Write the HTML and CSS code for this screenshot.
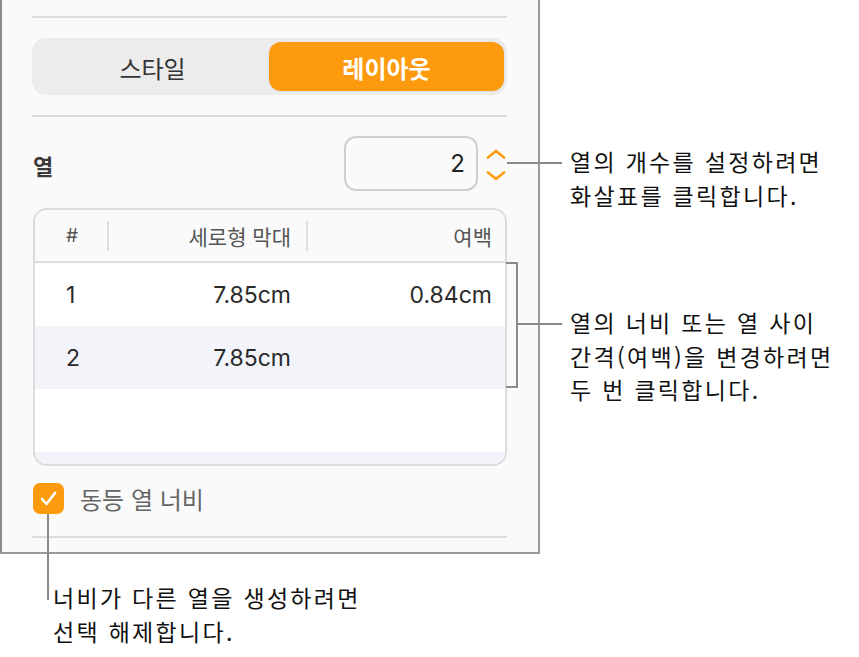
FILE: index.html
```html
<!DOCTYPE html>
<html lang="ko">
<head>
<meta charset="utf-8">
<title>열 레이아웃</title>
<link rel="stylesheet" href="styles.css">
</head>
<body>
<div class="stage">
  <section class="panel">
    <div class="divider first"></div>
    <div class="segmented">
      <div class="seg">스타일</div>
      <div class="seg active">레이아웃</div>
    </div>
    <div class="divider"></div>
    <div class="cols-row">
      <div class="label">열</div>
      <div class="stepper">
        <div class="field">2</div>
        <div class="arrows">
          <svg width="20" height="10" viewBox="0 0 20 10"><path d="M2 8.5 L10 2 L18 8.5" fill="none" stroke="#fe9a0d" stroke-width="2.6" stroke-linecap="round" stroke-linejoin="round"/></svg>
          <svg width="20" height="10" viewBox="0 0 20 10"><path d="M2 1.5 L10 8 L18 1.5" fill="none" stroke="#fe9a0d" stroke-width="2.6" stroke-linecap="round" stroke-linejoin="round"/></svg>
        </div>
      </div>
    </div>
    <div class="table">
      <div class="thead">
        <div class="th c1">#</div>
        <div class="th c2 sep">세로형 막대</div>
        <div class="th c3 sep">여백</div>
      </div>
      <div class="tr">
        <div class="td c1">1</div>
        <div class="td c2">7.85cm</div>
        <div class="td c3">0.84cm</div>
      </div>
      <div class="tr alt">
        <div class="td c1">2</div>
        <div class="td c2">7.85cm</div>
        <div class="td c3"></div>
      </div>
      <div class="tr"></div>
      <div class="strip"></div>
    </div>
    <div class="check-row">
      <div class="checkbox">
        <svg width="31" height="31" viewBox="0 0 31 31"><path d="M9 16 L13.5 21 L22 10" fill="none" stroke="#fff" stroke-width="2.6" stroke-linecap="round" stroke-linejoin="round"/></svg>
      </div>
      <div class="check-label">동등 열 너비</div>
    </div>
    <div class="divider last"></div>
  </section>

  <div class="line line1"></div>
  <p class="callout callout1">열의 개수를 설정하려면<br>화살표를 클릭합니다.</p>

  <div class="bracket"></div>
  <div class="line line2"></div>
  <p class="callout callout2">열의 너비 또는 열 사이<br>간격(여백)을 변경하려면<br>두 번 클릭합니다.</p>

  <div class="vline"></div>
  <p class="callout callout3">너비가 다른 열을 생성하려면<br>선택 해제합니다.</p>
</div>
</body>
</html>
```

FILE: styles.css
```css
* { box-sizing: border-box; }
html, body { margin: 0; padding: 0; background: #ffffff; }
body {
  font-family: "Inter", "Noto Sans CJK KR", sans-serif;
  color: #222;
}
.stage {
  position: relative;
  width: 859px;
  height: 657px;
  overflow: hidden;
}
.panel {
  width: 540px;
  height: 554px;
  background: #fafafa;
  border-left: 2px solid #8c8c8c;
  border-right: 2px solid #9a9a9a;
  border-bottom: 2px solid #9a9a9a;
  padding: 16px 31px 0 30px;
  display: flex;
  flex-direction: column;
}
.divider {
  height: 2px;
  background: #dcdcdc;
  flex: none;
}
.segmented {
  margin-top: 20px;
  height: 57px;
  background: #ececec;
  border-radius: 14px;
  padding: 4px 3px 4px 4px;
  display: grid;
  grid-template-columns: 1fr 235px;
  margin-bottom: 20px;
}
.seg {
  display: flex;
  align-items: center;
  justify-content: center;
  font-size: 24px;
  color: #333;
  font-family: "Noto Sans CJK KR", sans-serif;
  padding-top: 1px;
}
.seg.active {
  background: #fe9a0d;
  color: #fff;
  border-radius: 12px;
  font-weight: 700;
  box-shadow: 0 0 2px rgba(0,0,0,0.12);
}
.cols-row {
  margin-top: 19px;
  display: flex;
  align-items: center;
  justify-content: space-between;
  height: 55px;
}
.label {
  font-family: "Noto Sans CJK KR", sans-serif;
  font-weight: 700;
  font-size: 22px;
  color: #3a3a3a;
  padding-left: 1px;
  padding-top: 2px;
}
.stepper {
  display: flex;
  align-items: center;
  gap: 8px;
  padding-right: 1px;
}
.field {
  width: 134px;
  height: 55px;
  border: 2px solid #cfcfcf;
  border-radius: 12px;
  background: #fafafa;
  display: flex;
  align-items: center;
  justify-content: flex-end;
  padding-right: 11px;
  font-size: 24px;
  color: #222;
}
.arrows {
  display: flex;
  flex-direction: column;
  gap: 12px;
  width: 20px;
  padding-top: 2px;
}
.arrows svg { display: block; }
.table {
  margin-top: 17px;
  margin-left: 1px;
  border: 2px solid #dcdcdc;
  border-radius: 14px;
  overflow: hidden;
  background: #fff;
  flex: none;
}
.thead {
  height: 53px;
  background: #fafafa;
  border-bottom: 2px solid #dcdcdc;
  display: grid;
  grid-template-columns: 72px 199px 1fr;
  align-items: center;
}
.th {
  font-size: 21px;
  color: #555;
  height: 30px;
  display: flex;
  align-items: center;
  font-family: "Noto Sans CJK KR", sans-serif;
}
.th.sep { border-left: 2px solid #dedede; }
.c1 { padding-left: 31px; }
.c2 { justify-content: flex-end; padding-right: 15px; }
.c3 { justify-content: flex-end; padding-right: 13px; }
.th.c1 { font-family: "Inter", sans-serif; font-size: 19px; }
.tr {
  height: 63px;
  display: grid;
  grid-template-columns: 72px 199px 1fr;
  align-items: center;
}
.tr.alt { background: #f2f4fa; }
.td {
  display: flex;
  font-size: 23px;
  color: #2a2a2a;
}
.strip {
  height: 12px;
  background: #f2f4fa;
}
.check-row {
  margin-top: 17px;
  height: 31px;
  display: flex;
  align-items: center;
  gap: 16px;
  padding-left: 1px;
}
.checkbox {
  width: 31px;
  height: 31px;
  border-radius: 7px;
  background: #fe9a0d;
  flex: none;
}
.checkbox svg { display: block; }
.check-label {
  font-family: "Noto Sans CJK KR", sans-serif;
  font-size: 24px;
  line-height: 31px;
  color: #666;
}
.divider.last { margin-top: 22px; }

/* annotations */
.line {
  position: absolute;
  height: 2px;
  background: #8a8a8a;
}
.line1 { left: 507px; top: 162px; width: 55px; }
.line2 { left: 518px; top: 323px; width: 44px; }
.bracket {
  position: absolute;
  left: 506px;
  top: 262px;
  width: 12px;
  height: 126px;
  border: 2px solid #8a8a8a;
  border-left: none;
}
.vline {
  position: absolute;
  left: 47px;
  top: 514px;
  width: 2px;
  height: 86px;
  background: #8a8a8a;
}
.callout {
  position: absolute;
  margin: 0;
  font-family: "Noto Sans CJK KR", sans-serif;
  font-size: 23px;
  line-height: 33.5px;
  letter-spacing: 2.3px;
  color: #111;
  white-space: nowrap;
}
.callout1 { left: 570px; top: 145px; }
.callout2 { left: 570px; top: 306px; }
.callout3 { left: 53px; top: 581px; }
```
